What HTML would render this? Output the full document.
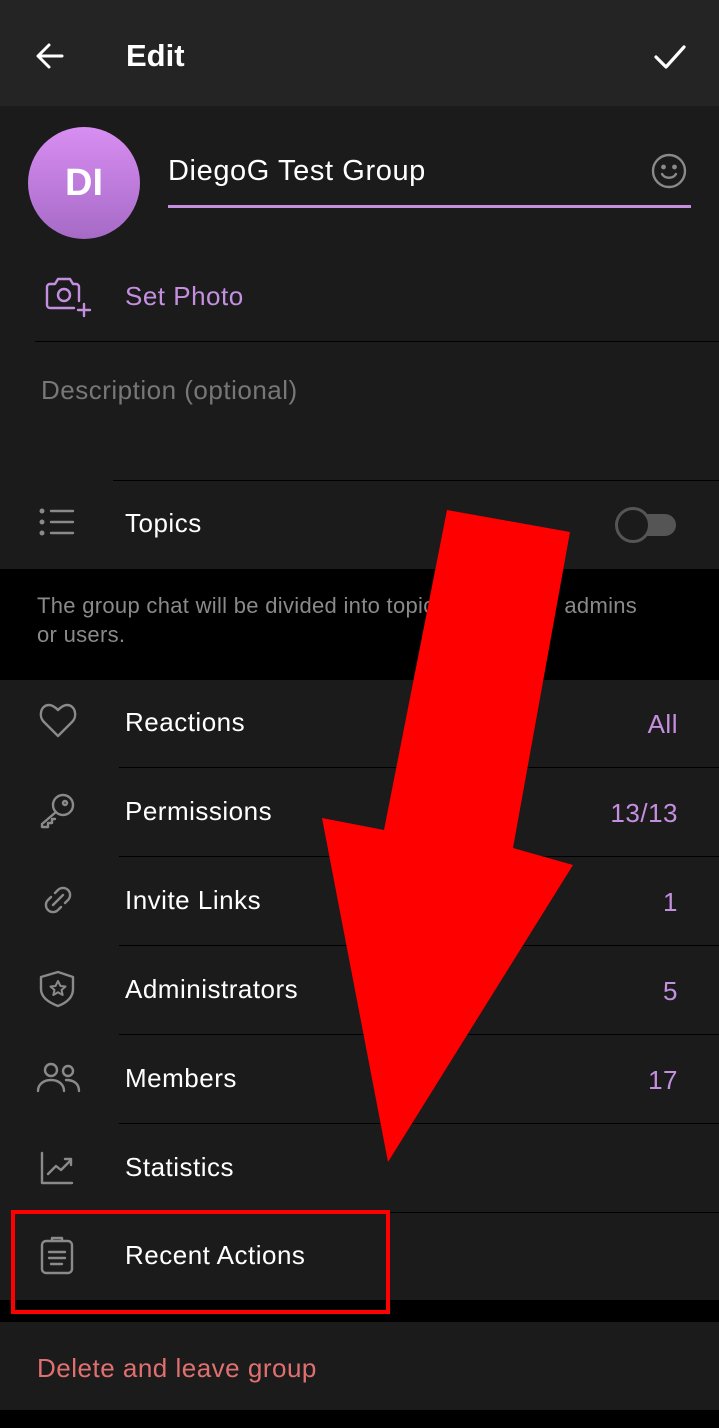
<!DOCTYPE html>
<html><head><meta charset="utf-8"><style>
*{margin:0;padding:0;box-sizing:border-box}
body{width:719px;height:1428px;background:#000;font-family:"Liberation Sans",sans-serif;position:relative;overflow:hidden;color:#fff}
.abs{position:absolute}
.hdr{left:0;top:0;width:719px;height:106px;background:#242424}
.sec{left:0;width:719px;background:#1b1b1b}
.t{font-size:26px;color:#fff;letter-spacing:0.5px}
.sep{height:1px;background:#000}
.val{right:41px;font-size:26px;color:#c58fe0;letter-spacing:0.5px}
svg{position:absolute;fill:none;stroke:#8a8a8a;stroke-width:2.4;stroke-linecap:round;stroke-linejoin:round}
</style></head><body>
<div class="abs hdr"></div>
<svg style="left:34px;top:40px" width="32" height="32" viewBox="0 0 32 32"><path d="M28 16H5M15 5L4 16l11 11" stroke="#fff" stroke-width="3"/></svg>
<div class="abs" style="left:126px;top:38px;font-size:31px;font-weight:bold">Edit</div>
<svg style="left:652px;top:42px" width="36" height="30" viewBox="0 0 36 30"><path d="M4 15l10 10L32 5" stroke="#fff" stroke-width="3.2"/></svg>

<div class="abs sec" style="top:106px;height:463px"></div>
<div class="abs" style="left:28px;top:127px;width:112px;height:112px;border-radius:50%;background:linear-gradient(#d88ef2,#a66ac6);color:#fff;font-size:38px;font-weight:bold;text-align:center;line-height:112px">DI</div>
<div class="abs t" style="left:168px;top:155px;font-size:29px;letter-spacing:0.6px">DiegoG Test Group</div>
<div class="abs" style="left:168px;top:205px;width:523px;height:3px;background:#c58fe0"></div>
<svg style="left:650px;top:152px" width="38" height="38" viewBox="0 0 38 38"><circle cx="19" cy="19" r="16"/><circle cx="13.5" cy="15" r="1.2" fill="#8a8a8a"/><circle cx="24.5" cy="15" r="1.2" fill="#8a8a8a"/><path d="M12 22c3 5 11 5 14 0"/></svg>
<svg style="left:44px;top:276px" width="48" height="44" viewBox="0 0 48 44"><path d="M30 32H6a3 3 0 0 1-3-3V11a3 3 0 0 1 3-3h5l3-5h12l3 5h3a3 3 0 0 1 3 3v14" stroke="#c58fe0"/><circle cx="20" cy="19" r="6" stroke="#c58fe0"/><path d="M40 28v12M34 34h12" stroke="#c58fe0"/></svg>
<div class="abs" style="left:125px;top:281px;font-size:26px;color:#c58fe0;letter-spacing:0.5px">Set Photo</div>
<div class="abs sep" style="left:35px;top:341px;width:684px"></div>
<div class="abs" style="left:41px;top:375px;font-size:26px;color:#777;letter-spacing:0.5px">Description (optional)</div>
<div class="abs sep" style="left:113px;top:480px;width:606px"></div>
<svg style="left:38px;top:507px" width="40" height="30" viewBox="0 0 40 30"><circle cx="4" cy="4" r="1.3"/><circle cx="4" cy="15" r="1.3"/><circle cx="4" cy="26" r="1.3"/><path d="M13 4h22M13 15h22M13 26h22"/></svg>
<div class="abs t" style="left:125px;top:508px">Topics</div>
<div class="abs" style="left:620px;top:514px;width:56px;height:22px;border-radius:11px;background:#555"></div>
<div class="abs" style="left:615px;top:507px;width:36px;height:36px;border-radius:50%;background:#1b1b1b;border:3px solid #555"></div>

<div class="abs" style="left:37px;top:591px;font-size:22px;color:#8a8a8a;line-height:29px;width:625px;letter-spacing:0.3px">The group chat will be divided into topics created by admins or users.</div>

<div class="abs sec" style="top:680px;height:620px"></div>
<div class="abs t" style="left:125px;top:707px">Reactions</div><div class="abs val" style="top:709px">All</div>
<div class="abs sep" style="left:119px;top:767px;width:600px"></div>
<div class="abs t" style="left:125px;top:796px">Permissions</div><div class="abs val" style="top:798px">13/13</div>
<div class="abs sep" style="left:119px;top:856px;width:600px"></div>
<div class="abs t" style="left:125px;top:885px">Invite Links</div><div class="abs val" style="top:887px">1</div>
<div class="abs sep" style="left:119px;top:945px;width:600px"></div>
<div class="abs t" style="left:125px;top:974px">Administrators</div><div class="abs val" style="top:976px">5</div>
<div class="abs sep" style="left:119px;top:1034px;width:600px"></div>
<div class="abs t" style="left:125px;top:1063px">Members</div><div class="abs val" style="top:1065px">17</div>
<div class="abs sep" style="left:119px;top:1123px;width:600px"></div>
<div class="abs t" style="left:125px;top:1152px">Statistics</div>
<div class="abs sep" style="left:119px;top:1212px;width:600px"></div>
<div class="abs t" style="left:125px;top:1240px">Recent Actions</div>

<svg style="left:38px;top:700px" width="40" height="40" viewBox="0 0 40 40"><path d="M20 36L6 22C0 16 3 5 11 5c4 0 7 3 9 5 2-2 5-5 9-5 8 0 11 11 5 17z"/></svg>
<svg style="left:38px;top:790px" width="40" height="40" viewBox="0 0 40 40"><circle cx="25" cy="15" r="10"/><circle cx="27" cy="13" r="2"/><path d="M18 22L4 34v3h6v-4h4v-4h3"/></svg>
<svg style="left:38px;top:880px" width="40" height="40" viewBox="0 0 40 40"><path d="M17 13l3-3a7 7 0 0 1 10 10l-3 3M23 27l-3 3a7 7 0 0 1-10-10l3-3M15 25l10-10"/></svg>
<svg style="left:37px;top:968px" width="42" height="42" viewBox="0 0 42 42"><path d="M21 4l15 5v12c0 9-7 14-15 17C13 35 4 30 4 21V9z"/><path d="M21 13l2.5 5 5 .5-4 3.5 1.2 5-4.7-2.7-4.7 2.7 1.2-5-4-3.5 5-.5z" stroke-width="2"/></svg>
<svg style="left:36px;top:1058px" width="46" height="40" viewBox="0 0 46 40"><circle cx="15" cy="12" r="6"/><circle cx="32" cy="13" r="5"/><path d="M2 33c0-7 6-11 13-11s13 4 13 11M30 22c7 0 13 3 13 11"/></svg>
<svg style="left:38px;top:1148px" width="40" height="40" viewBox="0 0 40 40"><path d="M4 5v30h30M10 26l8-8 5 4 10-10M27 11h6v6"/></svg>
<svg style="left:38px;top:1234px" width="40" height="42" viewBox="0 0 40 42"><rect x="4" y="7" width="30" height="32" rx="4"/><path d="M14 7V4h10v3M11 18h16M11 24h16M13 30h11"/></svg>

<div class="abs" style="left:11px;top:1210px;width:379px;height:104px;border:4px solid #f00"></div>

<div class="abs sec" style="top:1322px;height:88px"></div>
<div class="abs" style="left:37px;top:1353px;font-size:26px;color:#e07070;letter-spacing:0.5px">Delete and leave group</div>

<svg style="left:0;top:0;stroke:none" width="719" height="1428"><polygon fill="#f00" points="447,510 570,532 513,848 573,865 388,1162 322,818 384,830"/></svg>
</body></html>
